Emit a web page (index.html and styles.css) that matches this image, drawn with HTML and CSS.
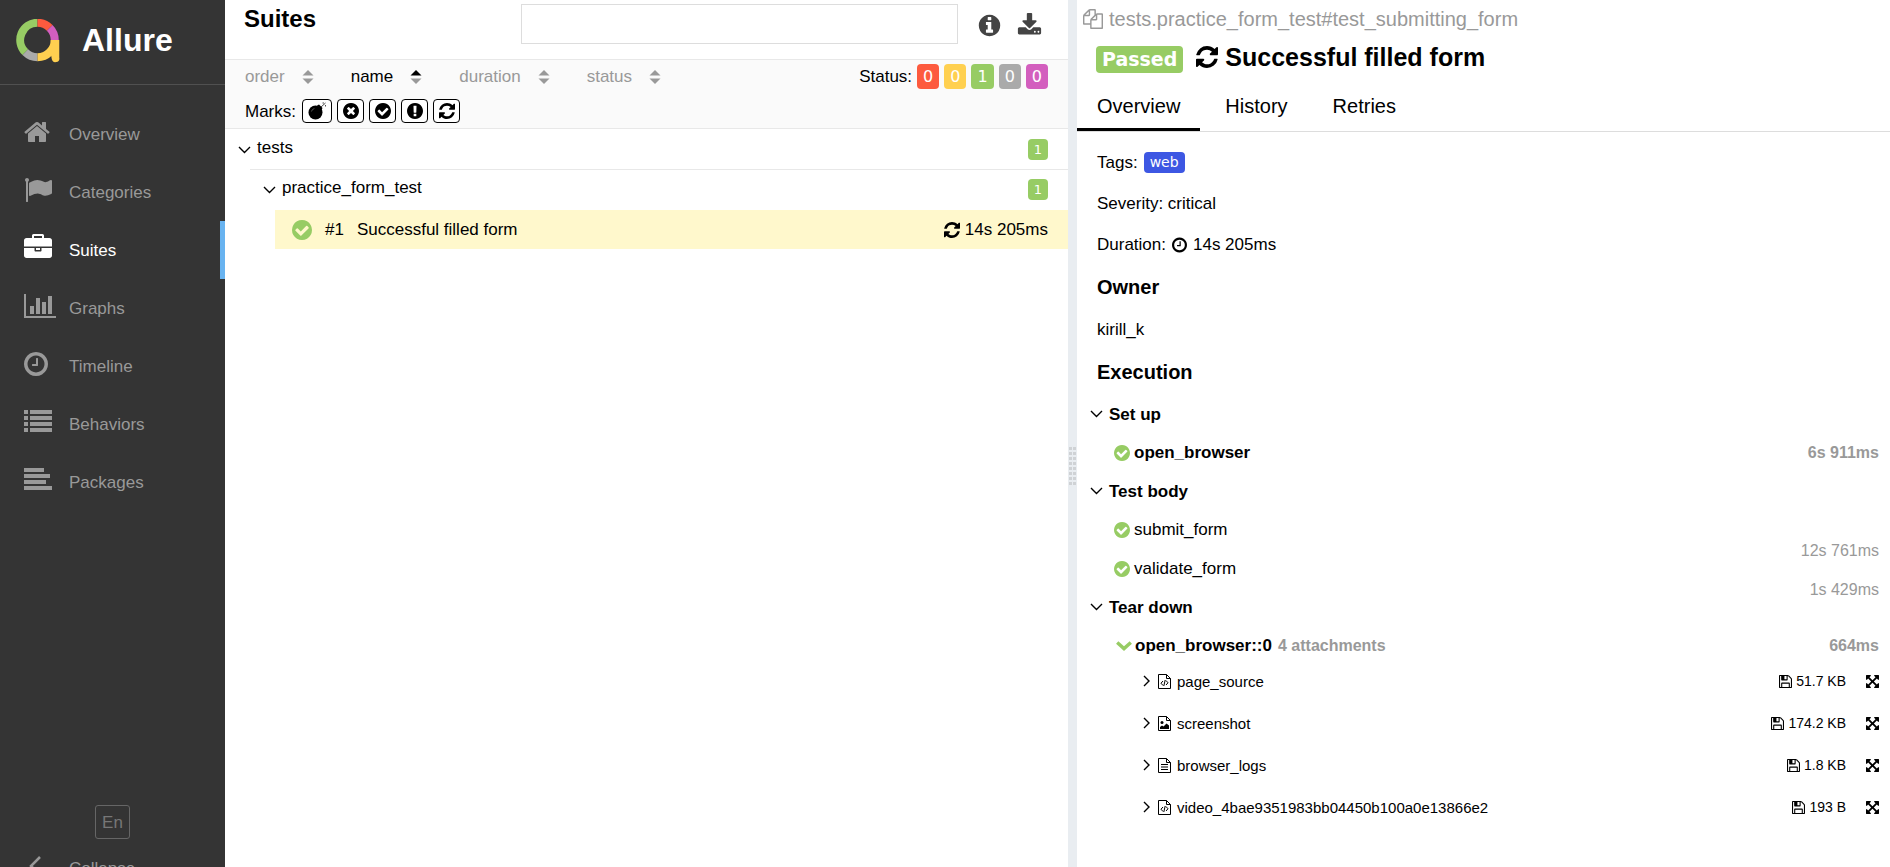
FILE: index.html
```html
<!DOCTYPE html>
<html lang="en">
<head>
<meta charset="utf-8">
<title>Allure Report</title>
<link rel="stylesheet" href="styles.css">
</head>
<body>
<svg class="sprite" aria-hidden="true">
  <symbol id="i-home" viewBox="64 0 1664 1792"><path d="M1472 992v480q0 26-19 45t-45 19h-384v-384h-256v384h-384q-26 0-45-19t-19-45v-480q0-1 .5-3t.5-3l575-474 575 474q1 2 1 6zm223-69l-62 74q-8 9-21 11h-3q-13 0-21-7l-692-577-692 577q-12 8-24 7-13-2-21-11l-62-74q-8-10-7-23.5t11-21.5l719-599q32-26 76-26t76 26l244 204v-195q0-14 9-23t23-9h192q14 0 23 9t9 23v408l219 182q10 8 11 21.5t-7 23.5z"/></symbol>
  <symbol id="i-flag" viewBox="0 0 1792 1792"><path d="M320 256q0 72-64 110v1266q0 13-9.500 22.500t-22.500 9.500h-64q-13 0-22.500-9.500t-9.500-22.500v-1266q-64-38-64-110 0-53 37.500-90.500t90.500-37.500 90.500 37.500 37.500 90.500zm1472 64v763q0 25-12.500 38.500t-39.500 27.500q-215 116-369 116-61 0-123.500-22t-108.500-48-115.500-48-142.500-22q-192 0-464 146-17 9-33 9-26 0-45-19t-19-45v-742q0-32 31-55 21-14 79-43 236-120 421-120 107 0 200 29t219 88q38 19 88 19 54 0 117.500-21t110-47 88-47 54.500-21q26 0 45 19t19 45z"/></symbol>
  <symbol id="i-case" viewBox="0 0 1792 1792"><path d="M640 256h512v-128h-512v128zm1152 640v480q0 66-47 113t-113 47h-1472q-66 0-113-47t-47-113v-480h672v160q0 26 19 45t45 19h320q26 0 45-19t19-45v-160h672zm-768 0v128h-256v-128h256zm768-480v384h-1792v-384q0-66 47-113t113-47h352v-160q0-40 28-68t68-28h576q40 0 68 28t28 68v160h352q66 0 113 47t47 113z"/></symbol>
  <symbol id="i-chart" viewBox="0 0 2048 1792"><path d="M640 896v512h-256v-512h256zm384-512v1024h-256v-1024h256zm1024 1152v128h-2048v-1536h128v1408h1920zm-640-896v768h-256v-768h256zm384-384v1152h-256v-1152h256z"/></symbol>
  <symbol id="i-clock" viewBox="128 0 1536 1792"><path d="M1024 544v448q0 14-9 23t-23 9h-320q-14 0-23-9t-9-23v-64q0-14 9-23t23-9h224v-352q0-14 9-23t23-9h64q14 0 23 9t9 23zm416 352q0-148-73-273t-198-198-273-73-273 73-198 198-73 273 73 273 198 198 273 73 273-73 198-198 73-273zm224 0q0 209-103 385.500t-279.500 279.500-385.500 103-385.500-103-279.500-279.500-103-385.500 103-385.500 279.500-279.500 385.500-103 385.500 103 279.500 279.500 103 385.500z"/></symbol>
  <symbol id="i-list" viewBox="0 0 28 28"><path d="M0 2h4v4H0zM6 2h22v4H6zM0 8h4v4H0zM6 8h22v4H6zM0 14h4v4H0zM6 14h22v4H6zM0 20h4v4H0zM6 20h22v4H6z"/></symbol>
  <symbol id="i-align" viewBox="0 0 28 28"><path d="M0 2h20v4H0zM0 8h26v4H0zM0 14h22v4H0zM0 20h28v4H0z"/></symbol>
  <symbol id="i-check" viewBox="128 128 1536 1536"><path d="M1412 734q0-28-18-46l-91-90q-19-19-45-19t-45 19l-408 407-226-226q-19-19-45-19t-45 19l-91 90q-18 18-18 46 0 27 18 45l362 362q19 19 45 19 27 0 46-19l543-543q18-18 18-45zm252 162q0 209-103 385.500t-279.500 279.500-385.500 103-385.500-103-279.500-279.500-103-385.500 103-385.500 279.500-279.500 385.500-103 385.500 103 279.500 279.500 103 385.500z"/></symbol>
  <symbol id="i-times" viewBox="128 128 1536 1536"><path d="M1277 1122q0-26-19-45l-181-181 181-181q19-19 19-45 0-27-19-46l-90-90q-19-18-46-18-26 0-45 18l-181 181-181-181q-19-18-45-18-27 0-46 18l-90 90q-19 19-19 46 0 26 19 45l181 181-181 181q-19 19-19 45 0 27 19 46l90 90q19 18 46 18 26 0 45-18l181-181 181 181q19 18 45 18 27 0 46-18l90-90q19-19 19-46zm387-226q0 209-103 385.500t-279.500 279.500-385.500 103-385.500-103-279.500-279.500-103-385.500 103-385.500 279.500-279.500 385.500-103 385.500 103 279.500 279.500 103 385.500z"/></symbol>
  <symbol id="i-excl" viewBox="128 128 1536 1536"><path d="M896 128q209 0 385.500 103t279.500 279.500 103 385.500-103 385.500-279.500 279.500-385.500 103-385.500-103-279.500-279.500-103-385.500 103-385.500 279.500-279.500 385.500-103zm128 1247v-190q0-14-9-23.500t-22-9.500h-192q-13 0-23 10t-10 23v190q0 13 10 23t23 10h192q13 0 22-9.500t9-23.500zm-2-344l18-621q0-12-10-18-10-8-24-8h-220q-14 0-24 8-10 6-10 18l17 621q0 10 10 17.500t24 7.500h185q14 0 23.500-7.500t10.500-17.500z"/></symbol>
  <symbol id="i-info" viewBox="0 0 1792 1792"><path d="M1152 1376v-160q0-14-9-23t-23-9h-96v-512q0-14-9-23t-23-9h-320q-14 0-23 9t-9 23v160q0 14 9 23t23 9h96v320h-96q-14 0-23 9t-9 23v160q0 14 9 23t23 9h448q14 0 23-9t9-23zm-128-896v-160q0-14-9-23t-23-9h-192q-14 0-23 9t-9 23v160q0 14 9 23t23 9h192q14 0 23-9t9-23zm640 416q0 209-103 385.500t-279.500 279.500-385.500 103-385.500-103-279.500-279.500-103-385.500 103-385.500 279.500-279.500 385.500-103 385.500 103 279.500 279.500 103 385.500z"/></symbol>
  <symbol id="i-download" viewBox="0 0 1792 1792"><path d="M1344 1344q0-26-19-45t-45-19-45 19-19 45 19 45 45 19 45-19 19-45zm256 0q0-26-19-45t-45-19-45 19-19 45 19 45 45 19 45-19 19-45zm128-224v320q0 40-28 68t-68 28h-1472q-40 0-68-28t-28-68v-320q0-40 28-68t68-28h465l135 136q58 56 136 56t136-56l136-136h464q40 0 68 28t28 68zm-325-569q17 41-14 70l-448 448q-18 19-45 19t-45-19l-448-448q-31-29-14-70 17-39 59-39h256v-448q0-26 19-45t45-19h256q26 0 45 19t19 45v448h256q42 0 59 39z"/></symbol>
  <symbol id="i-refresh" viewBox="128 128 1536 1536"><path d="M1639 1056q0 5-1 7-64 268-268 434.500t-478 166.500q-146 0-282.500-55t-243.500-157l-129 129q-19 19-45 19t-45-19-19-45v-448q0-26 19-45t45-19h448q26 0 45 19t19 45-19 45l-137 137q71 66 161 102t187 36q134 0 250-65t186-179q11-17 53-117 8-23 30-23h192q13 0 22.500 9.500t9.500 22.500zm25-800v448q0 26-19 45t-45 19h-448q-26 0-45-19t-19-45 19-45l138-138q-148-137-349-137-134 0-250 65t-186 179q-11 17-53 117-8 23-30 23h-199q-13 0-22.500-9.500t-9.500-22.500v-7q65-268 270-434.500t480-166.500q146 0 284 55.500t245 156.500l130-129q19-19 45-19t45 19 19 45z"/></symbol>
  <symbol id="i-files" viewBox="0 0 1792 1792"><path d="M1696 384q40 0 68 28t28 68v1216q0 40-28 68t-68 28h-960q-40 0-68-28t-28-68v-288h-544q-40 0-68-28t-28-68v-672q0-40 20-88t48-76l408-408q28-28 76-48t88-20h416q40 0 68 28t28 68v328q68-40 128-40h416zm-544 213l-299 299h299v-299zm-640-384l-299 299h299v-299zm196 647l316-316v-416h-384v416q0 40-28 68t-68 28h-416v640h512v-256q0-40 20-88t48-76zm956 804v-1152h-384v416q0 40-28 68t-68 28h-416v640h896z"/></symbol>
  <symbol id="i-save" viewBox="128 128 1536 1536"><path d="M512 1536h768v-384h-768v384zm896 0h128v-896q0-14-10-38.500t-20-34.500l-281-281q-10-10-34-20t-39-10v416q0 40-28 68t-68 28h-576q-40 0-68-28t-28-68v-416h-128v1280h128v-416q0-40 28-68t68-28h832q40 0 68 28t28 68v416zm-384-928v-320q0-13-9.500-22.500t-22.500-9.500h-192q-13 0-22.500 9.500t-9.500 22.500v320q0 13 9.500 22.500t22.500 9.500h192q13 0 22.500-9.500t9.500-22.500zm640 32v928q0 40-28 68t-68 28h-1344q-40 0-68-28t-28-68v-1344q0-40 28-68t68-28h928q40 0 88 20t76 48l280 280q28 28 48 76t20 88z"/></symbol>
  <symbol id="i-expand" viewBox="128 128 1536 1536"><path d="M1411 541l-355 355 355 355 144-144q29-31 70-14 39 17 39 59v448q0 26-19 45t-45 19h-448q-42 0-59-40-17-39 14-69l144-144-355-355-355 355 144 144q31 30 14 69-17 40-59 40h-448q-26 0-45-19t-19-45v-448q0-42 40-59 39-17 69 14l144 144 355-355-355-355-144 144q-19 19-45 19-12 0-24-5-40-17-40-59v-448q0-26 19-45t45-19h448q42 0 59 40 17 39-14 69l-144 144 355 355 355-355-144-144q-31-30-14-69 17-40 59-40h448q26 0 45 19t19 45v448q0 42-39 59-13 5-25 5-26 0-45-19z"/></symbol>
  <symbol id="i-bomb" viewBox="0 0 19 18"><circle cx="7.500" cy="10.500" r="7"/><path d="M9 3.500l2-1 3.500 3.500-1 2z"/><path d="M3.400 9.500a4.300 4.300 0 0 1 3-3" stroke="#777" stroke-width=".7" fill="none"/><path d="M13 5l4.500-4M14.500 1h1.500M17.500 3v1.500" stroke="currentColor" stroke-width=".7" fill="none"/></symbol>
  <symbol id="i-down" viewBox="0 0 13 8"><path d="M1 1l5.500 5.500L12 1" fill="none" stroke="currentColor" stroke-width="1.400"/></symbol>
  <symbol id="i-down-bold" viewBox="0 0 16 10"><path d="M1.200 1.500L8 7.600l6.800-6.100" fill="none" stroke="currentColor" stroke-width="3.400"/></symbol>
  <symbol id="i-right" viewBox="0 0 8 12"><path d="M1 1l5 5-5 5" fill="none" stroke="currentColor" stroke-width="1.400"/></symbol>
  <symbol id="i-left" viewBox="0 0 12 20"><path d="M11 1L2 10l9 9" fill="none" stroke="currentColor" stroke-width="2.500"/></symbol>
  <symbol id="i-sort" viewBox="0 0 12 14"><path d="M6 0l5.500 5.500H.5z"/><path d="M6 14L.5 8.500h11z"/></symbol>
  <symbol id="i-sort-asc" viewBox="0 0 12 14"><path fill="#000" d="M6 0l5.500 5.500H.5z"/><path fill="#999" d="M6 14L.5 8.500h11z"/></symbol>
  <symbol id="i-code" viewBox="0 0 13 15"><path d="M.5.500h8l4 4v10H.5zM8.500.500v4h4M5 7L3 9.200 5 11.500M8 6.500l2 2.300L8 11M7.200 6L5.800 12" fill="none" stroke="currentColor"/></symbol>
  <symbol id="i-image" viewBox="0 0 13 15"><path d="M.5.500h8l4 4v10H.5zM8.500.500v4h4" fill="none" stroke="currentColor"/><circle cx="4" cy="6.500" r="1.500"/><path d="M2 13v-2l2-1.500 1.500 1L8.500 7.500l2.500 2V13z"/></symbol>
  <symbol id="i-text" viewBox="0 0 13 15"><path d="M.5.500h8l4 4v10H.5zM8.500.500v4h4M3 6.500h7M3 9h7M3 11.500h7" fill="none" stroke="currentColor"/></symbol>
  <symbol id="i-logo" viewBox="0 0 44 44">
    <g fill="none" stroke-width="8">
      <path stroke="#97cc64" d="M9.300 33.200A17.250 17.250 0 0 1 21.500 3.750"/>
      <path stroke="#fd5a3e" d="M21.500 3.750a17.250 17.250 0 0 1 12.200 5.050"/>
      <path stroke="#d35ebe" d="M33.700 8.800a17.250 17.250 0 0 1 5.050 12.200"/>
      <path stroke="#aaa" d="M21.500 38.250a17.250 17.250 0 0 1-12.200-5.050"/>
      <path stroke="#ffd050" d="M38.750 21a17.250 17.250 0 0 1-17.250 17.250"/>
    </g>
    <path fill="#ffd050" d="M34.750 21h8.500v17.500a3.800 3.800 0 0 1-7.500 1.500l-1-6z"/>
  </symbol>
</svg>

<aside class="side">
  <a class="brand" href="#"><svg class="brand-logo"><use href="#i-logo"/></svg><span>Allure</span></a>
  <nav class="menu">
    <a class="menu-item" href="#"><span class="menu-icon"><svg class="w26"><use href="#i-home"/></svg></span>Overview</a>
    <a class="menu-item" href="#"><span class="menu-icon"><svg class="w28"><use href="#i-flag"/></svg></span>Categories</a>
    <a class="menu-item active" href="#"><span class="menu-icon"><svg class="w28"><use href="#i-case"/></svg></span>Suites</a>
    <a class="menu-item" href="#"><span class="menu-icon"><svg class="w32"><use href="#i-chart"/></svg></span>Graphs</a>
    <a class="menu-item" href="#"><span class="menu-icon"><svg class="w24"><use href="#i-clock"/></svg></span>Timeline</a>
    <a class="menu-item" href="#"><span class="menu-icon"><svg class="w28"><use href="#i-list"/></svg></span>Behaviors</a>
    <a class="menu-item" href="#"><span class="menu-icon"><svg class="w28"><use href="#i-align"/></svg></span>Packages</a>
  </nav>
  <div class="side-foot">
    <button class="lang" type="button">En</button>
    <a class="menu-item" href="#"><span class="menu-icon center"><svg class="arrow"><use href="#i-left"/></svg></span>Collapse</a>
  </div>
</aside>

<main class="suites">
  <header class="suites-head">
    <h1 class="suites-title">Suites</h1>
    <input class="search" type="search" aria-label="Search">
    <button class="icon-btn" type="button" aria-label="Info"><svg><use href="#i-info"/></svg></button>
    <button class="icon-btn" type="button" aria-label="Download CSV"><svg><use href="#i-download"/></svg></button>
  </header>
  <section class="filters">
    <div class="filters-row">
      <div class="sorter">
        <button class="sort" type="button">order<svg><use href="#i-sort"/></svg></button>
        <button class="sort on" type="button">name<svg><use href="#i-sort-asc"/></svg></button>
        <button class="sort" type="button">duration<svg><use href="#i-sort"/></svg></button>
        <button class="sort" type="button">status<svg><use href="#i-sort"/></svg></button>
      </div>
      <div class="statuses">
        <span>Status:</span>
        <button class="status failed" type="button">0</button>
        <button class="status broken" type="button">0</button>
        <button class="status passed" type="button">1</button>
        <button class="status skipped" type="button">0</button>
        <button class="status unknown" type="button">0</button>
      </div>
    </div>
    <div class="marks">
      <span>Marks:</span>
      <button class="mark wide" type="button" aria-label="Flaky"><svg class="bomb"><use href="#i-bomb"/></svg></button>
      <button class="mark" type="button" aria-label="New failed"><svg><use href="#i-times"/></svg></button>
      <button class="mark" type="button" aria-label="New passed"><svg><use href="#i-check"/></svg></button>
      <button class="mark" type="button" aria-label="New broken"><svg><use href="#i-excl"/></svg></button>
      <button class="mark" type="button" aria-label="Retries"><svg><use href="#i-refresh"/></svg></button>
    </div>
  </section>
  <div class="tree">
    <div class="node"><svg class="chev"><use href="#i-down"/></svg><span class="node-name">tests</span><span class="count">1</span></div>
    <div class="branch">
      <div class="node"><svg class="chev"><use href="#i-down"/></svg><span class="node-name">practice_form_test</span><span class="count">1</span></div>
      <div class="branch">
        <a class="leaf" href="#"><svg class="leaf-ok"><use href="#i-check"/></svg><span class="leaf-num">#1</span><span class="leaf-name">Successful filled form</span><svg class="leaf-retry"><use href="#i-refresh"/></svg><span>14s 205ms</span></a>
      </div>
    </div>
  </div>
</main>

<div class="gutter"><div class="grip"></div></div>

<article class="details">
  <div class="fullname"><svg><use href="#i-files"/></svg><span>tests.practice_form_test#test_submitting_form</span></div>
  <div class="case-head"><span class="badge">Passed</span><svg><use href="#i-refresh"/></svg><h2>Successful filled form</h2></div>
  <nav class="tabs">
    <a class="tab current" href="#">Overview</a>
    <a class="tab" href="#">History</a>
    <a class="tab" href="#">Retries</a>
  </nav>
  <section class="overview">
    <p class="line">Tags: <span class="tag">web</span></p>
    <p class="line">Severity: critical</p>
    <p class="line">Duration: <svg class="dur"><use href="#i-clock"/></svg> 14s 205ms</p>
    <h3 class="heading">Owner</h3>
    <p class="line">kirill_k</p>
    <h3 class="heading">Execution</h3>
    <div class="steps">
      <div class="stage"><svg class="chev"><use href="#i-down"/></svg>Set up</div>
      <div class="step strong"><svg class="ok"><use href="#i-check"/></svg><span>open_browser</span><span class="time">6s 911ms</span></div>
      <div class="stage"><svg class="chev"><use href="#i-down"/></svg>Test body</div>
      <div class="step"><svg class="ok"><use href="#i-check"/></svg><span>submit_form</span><span class="time below">12s 761ms</span></div>
      <div class="step"><svg class="ok"><use href="#i-check"/></svg><span>validate_form</span><span class="time below">1s 429ms</span></div>
      <div class="stage"><svg class="chev"><use href="#i-down"/></svg>Tear down</div>
      <div class="step strong expanded"><svg class="open"><use href="#i-down-bold"/></svg><span>open_browser::0</span><span class="note">4 attachments</span><span class="time">664ms</span></div>
      <div class="files">
        <div class="file"><svg class="more"><use href="#i-right"/></svg><svg class="type"><use href="#i-code"/></svg><span>page_source</span><a class="size" href="#"><svg><use href="#i-save"/></svg>51.7 KB</a><button class="full" type="button" aria-label="Full screen"><svg><use href="#i-expand"/></svg></button></div>
        <div class="file"><svg class="more"><use href="#i-right"/></svg><svg class="type"><use href="#i-image"/></svg><span>screenshot</span><a class="size" href="#"><svg><use href="#i-save"/></svg>174.2 KB</a><button class="full" type="button" aria-label="Full screen"><svg><use href="#i-expand"/></svg></button></div>
        <div class="file"><svg class="more"><use href="#i-right"/></svg><svg class="type"><use href="#i-text"/></svg><span>browser_logs</span><a class="size" href="#"><svg><use href="#i-save"/></svg>1.8 KB</a><button class="full" type="button" aria-label="Full screen"><svg><use href="#i-expand"/></svg></button></div>
        <div class="file"><svg class="more"><use href="#i-right"/></svg><svg class="type"><use href="#i-code"/></svg><span>video_4bae9351983bb04450b100a0e13866e2</span><a class="size" href="#"><svg><use href="#i-save"/></svg>193 B</a><button class="full" type="button" aria-label="Full screen"><svg><use href="#i-expand"/></svg></button></div>
      </div>
    </div>
  </section>
</article>
</body>
</html>
```

FILE: styles.css
```css
* { box-sizing: border-box; }
body {
  margin: 0;
  height: 100vh;
  display: flex;
  overflow: hidden;
  background: #fff;
  color: #000;
  font: 17px/21px "Liberation Sans", Arial, sans-serif;
}
h1, h2, h3, p { margin: 0; }
a { color: inherit; text-decoration: none; }
button { font: inherit; color: inherit; background: none; border: 0; padding: 0; margin: 0; }
svg { fill: currentColor; flex: none; display: block; }
.sprite { position: absolute; width: 0; height: 0; }

/* Sidebar */
.side {
  flex: 0 0 225px;
  display: flex;
  flex-direction: column;
  overflow: hidden;
  background: #343434;
  color: #999;
}
.brand {
  display: flex;
  align-items: center;
  gap: 22px;
  height: 85px;
  padding: 0 16px 3px;
  border-bottom: 1px solid #505050;
  color: #fff;
  font-size: 32px;
  font-weight: bold;
}
.brand-logo { width: 44px; height: 44px; }
.menu { padding-top: 20px; }
.menu-item {
  display: flex;
  align-items: center;
  height: 58px;
  padding-left: 24px;
  border-right: 5px solid transparent;
}
.menu-item.active { color: #fff; border-color: #68b3f0; }
.menu-icon { width: 45px; padding-bottom: 4px; }
.menu-icon svg { height: 28px; }
.w24 { width: 24px; }
.w26 { width: 26px; }
.w28 { width: 28px; }
.w32 { width: 32px; }
.menu-icon.center { padding-left: 5px; }
.menu-icon .arrow { width: 12px; height: 20px; }
.side-foot {
  margin-top: auto;
  margin-bottom: -30px;
  display: flex;
  flex-direction: column;
}
.lang {
  align-self: center;
  width: 35px;
  height: 34px;
  border: 1px solid #666;
  border-radius: 3px;
  color: #777;
}

/* Suites pane */
.suites { flex: 843 1 0; min-width: 0; }
.suites-head {
  display: flex;
  align-items: flex-start;
  height: 60px;
  padding: 0 26px 0 19px;
  border-bottom: 1px solid #e8e8e8;
}
.suites-title { font-size: 24px; line-height: 38px; }
.search {
  width: 437px;
  height: 40px;
  margin: 4px 4px 0 auto;
  border: 1px solid #ddd;
  background: #fff;
}
.icon-btn { margin: 13px 0 0 15px; color: #444; }
.icon-btn svg { width: 25px; height: 25px; }
.filters {
  padding: 4px 20px 5px;
  background: #fafafa;
  border-bottom: 1px solid #e8e8e8;
}
.filters-row { display: flex; justify-content: space-between; height: 25px; align-items: center; }
.sorter { display: flex; gap: 37px; color: #999; }
.sort { display: flex; align-items: center; gap: 17px; }
.sort svg { width: 12px; height: 14px; }
.sort.on { color: #000; }
.statuses { display: flex; align-items: center; gap: 5px; }
.status {
  min-width: 22px;
  height: 25px;
  padding: 0 6px;
  border-radius: 4px;
  color: #fff;
  font: 16px/25px "DejaVu Sans", Verdana, sans-serif;
}
.failed { background: #fd5a3e; }
.broken { background: #ffd050; }
.passed { background: #97cc64; }
.skipped { background: #aaa; }
.unknown { background: #d35ebe; }
.marks { display: flex; align-items: center; gap: 5px; height: 24px; margin-top: 10px; }
.mark {
  width: 27px;
  height: 24px;
  display: flex;
  align-items: center;
  justify-content: center;
  border: 1px solid #000;
  border-radius: 4px;
  background: #fff;
}
.mark.wide { width: 30px; margin-left: 1px; }
.mark svg { width: 16px; height: 16px; }
.mark .bomb { width: 19px; height: 18px; }
.tree { padding: 1px 0 0 13px; }
.branch { margin-left: 25px; }
.tree > .branch { margin-left: 12px; }
.tree > .branch > .node { border-top: 1px solid #e8e8e8; margin-top: -1px; padding-left: 13px; height: 41px; }
.node {
  display: flex;
  align-items: center;
  height: 40px;
  padding-right: 20px;
  border-bottom: 1px solid transparent;
}
.chev { width: 13px; height: 8px; }
.node-name { margin-left: 6px; padding-bottom: 4px; }
.count {
  margin-left: auto;
  padding: 0 6px;
  border-radius: 4px;
  background: #97cc64;
  color: #fff;
  font: 13px/21px "DejaVu Sans", Verdana, sans-serif;
}
.leaf {
  display: flex;
  align-items: center;
  height: 39px;
  padding: 0 20px 0 17px;
  background: #fff8cc;
}
.leaf-ok { width: 20px; height: 20px; color: #97cc64; }
.leaf-num { margin-left: 13px; }
.leaf-name { margin: 0 auto 0 13px; }
.leaf-retry { width: 16px; height: 16px; margin-right: 5px; }

/* Splitter */
.gutter {
  flex: 0 0 9px;
  display: flex;
  align-items: center;
  justify-content: center;
  background: #e9edf1;
}
.grip {
  width: 7px;
  height: 38px;
  margin-top: 65px;
  background: repeating-linear-gradient(transparent 0 3px, #e9edf1 3px 5px),
    repeating-linear-gradient(90deg, #cfd2d5 0 3px, #e9edf1 3px 4px);
}

/* Test case pane */
.details { flex: 813 1 0; min-width: 0; }
.fullname {
  display: flex;
  align-items: center;
  gap: 6px;
  padding: 7px 0 0 6px;
  color: #999;
  font-size: 20px;
  line-height: 24px;
}
.fullname svg { width: 20px; height: 20px; }
.case-head {
  display: flex;
  align-items: flex-start;
  height: 28px;
  margin: 14px 0 0 19px;
}
.badge {
  padding: 0 6px;
  margin-top: 1px;
  border-radius: 4px;
  background: #97cc64;
  color: #fff;
  font: bold 19px/27px "DejaVu Sans", Verdana, sans-serif;
}
.case-head svg { width: 22px; height: 22px; margin: 1px 7px 0 13px; }
.case-head h2 { font-size: 25px; line-height: 25px; }
.tabs {
  display: flex;
  gap: 5px;
  margin-top: 19px;
  border-bottom: 1px solid #ddd;
  font-size: 20px;
  line-height: 28px;
}
.tab { padding: 0 20px 8px; border-bottom: 3px solid transparent; }
.tab.current { border-color: #000; }
.overview { padding: 20px 11px 0 20px; }
.line { display: flex; align-items: center; gap: 6px; margin-bottom: 20px; }
.tag {
  padding: 0 6px;
  border-radius: 4px;
  background: #3d57e3;
  color: #fff;
  font: 14px/21px "DejaVu Sans", Verdana, sans-serif;
}
.dur { width: 15px; height: 18px; }
.heading { margin-bottom: 20px; font-size: 20px; line-height: 24px; }
.steps { margin: -9px 0 0 -7px; }
.stage { display: flex; align-items: center; gap: 6px; height: 38px; font-weight: bold; }
.step { display: flex; align-items: center; gap: 4px; height: 39px; padding-left: 24px; }
.step.expanded { gap: 3px; padding-left: 26px; }
.strong { font-weight: bold; }
.ok { width: 16px; height: 16px; color: #97cc64; }
.open { width: 16px; height: 10px; color: #97cc64; }
.note, .time { font-size: 16px; color: #999; }
.note { margin-left: 3px; }
.time { margin-left: auto; }
.below { margin-top: 21px; margin-bottom: -21px; }
.files { display: grid; gap: 10px; padding-left: 53px; font-size: 15px; }
.file { display: flex; align-items: center; height: 32px; }
.more { width: 8px; height: 12px; }
.type { width: 13px; height: 15px; margin: 0 6px 0 7px; }
.size { display: flex; align-items: center; gap: 4px; margin-left: auto; font-size: 14px; }
.size svg { width: 13px; height: 13px; }
.full { margin-left: 20px; }
.full svg { width: 13px; height: 13px; }
```
